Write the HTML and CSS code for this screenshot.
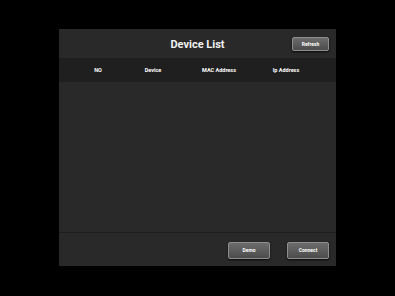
FILE: index.html
```html
<!DOCTYPE html>
<html lang="en">
<head>
    <meta charset="UTF-8">
    <meta name="viewport" content="width=device-width, initial-scale=1.0">
    <title>Device List</title>
    <link rel="stylesheet" href="styles.css">
</head>

<body>
    <section class="panel">
        <header class="panel-head">
            <h1 class="title">Device List</h1>
            <button class="btn btn-small" id="refresh">Refresh</button>
        </header>

        <div class="table-head">
            <div>NO</div>
            <div>Device</div>
            <div>MAC Address</div>
            <div>Ip Address</div>
        </div>

        <div class="table-body"></div>

        <footer class="panel-foot">
            <button class="btn" id="demo">Demo</button>
            <button class="btn" id="connect">Connect</button>
        </footer>
    </section>
</body>
</html>
```

FILE: styles.css
```css
* {
    font-family: Roboto, "Liberation Sans", sans-serif;
    box-sizing: border-box;
}

body {
    margin: 0;
    background-color: #000000;
    width: 395px;
    height: 296px;
    padding-top: 29px;
    padding-left: 59px;
}

.panel {
    width: 277px;
    height: 237px;
    background-color: #292929;
    display: flex;
    flex-direction: column;
}

.panel-head {
    height: 29px;
    display: flex;
    align-items: center;
    justify-content: center;
    position: relative;
}

.title {
    margin: 0;
    font-size: 11px;
    font-weight: 700;
    color: #f2f2f2;
    padding-top: 1px;
}

.btn {
    background: linear-gradient(#6c6c6c, #4c4c4c);
    border: 1px solid #8e8e8e;
    border-radius: 2px;
    box-shadow: 0 1px 2px rgba(0, 0, 0, 0.8);
    color: #ffffff;
    font-size: 5px;
    font-weight: 700;
    width: 42px;
    height: 17px;
    padding: 0;
    cursor: pointer;
}

.btn-small {
    position: absolute;
    right: 7px;
    top: 8px;
    width: 37px;
    height: 14px;
}

.table-head {
    height: 24px;
    background-color: #1f1f1f;
    display: grid;
    grid-template-columns: 78px 32px 100px 34px;
    justify-items: center;
    align-items: center;
    color: #ffffff;
    font-size: 5.5px;
    font-weight: 700;
}

.table-body {
    flex: 1;
    border-bottom: 1px solid #1e1e1e;
}

.panel-foot {
    height: 33px;
    display: flex;
    justify-content: flex-end;
    align-items: center;
    gap: 17px;
    padding-right: 7px;
    padding-top: 1px;
}
```
